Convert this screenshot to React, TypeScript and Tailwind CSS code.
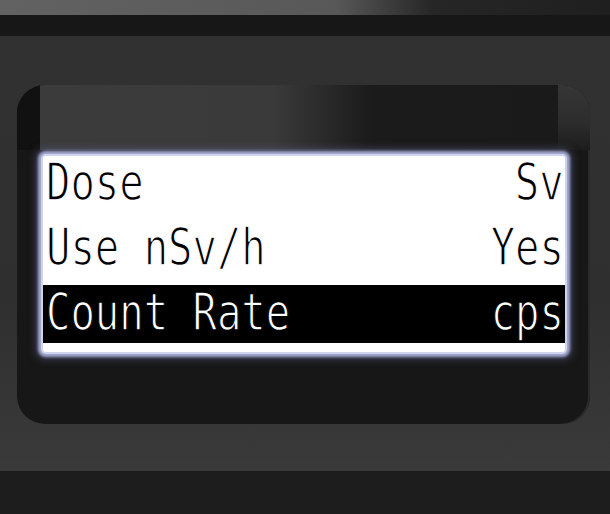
import React from "react";

const rows = [
  { label: "Dose", value: "Sv", selected: false },
  { label: "Use nSv/h", value: "Yes", selected: false },
  { label: "Count Rate", value: "cps", selected: true },
];

export default function App() {
  return (
    <div className="flex h-[514px] w-[610px] flex-col overflow-hidden bg-[#303030] font-['DejaVu_Sans_Mono',monospace]">
      {/* top edge of the case */}
      <div className="h-[15px] bg-[linear-gradient(to_right,#626262_0%,#585858_55%,#262626_71%,#1f1f1f_100%)]" />
      <div className="h-[21px] bg-[#171717]" />

      {/* case body */}
      <div className="flex-1 bg-[linear-gradient(to_bottom,#313131_0%,#2f2f2f_60%,#3a3a3a_100%)] pb-[47px] pl-[17px] pr-[20px] pt-[49px]">
        <div className="flex h-[339px] flex-col overflow-hidden rounded-[28px] bg-[#171717] shadow-[inset_-2px_0_0_#2a2a2a]">
          {/* reflection above the screen */}
          <div className="flex h-[65px]">
            <div className="w-[23px] bg-[#111111]" />
            <div className="flex-1 bg-[linear-gradient(to_right,#3b3b3b_0%,#3a3a3a_45%,#1b1b1b_64%,#1a1a1a_100%)]" />
            <div className="w-[32px] bg-[linear-gradient(to_bottom,#363636_0%,#2c2c2c_60%,#1c1c1c_100%)]" />
          </div>

          {/* LCD */}
          <div className="ml-[26px] mr-[25px] mt-[6px] rounded-[3px] bg-white pb-[9px] text-[52px] leading-[52px] shadow-[0_0_0_2px_#d0d3ee,0_0_3px_5px_#a4a9d0,0_0_9px_7px_rgba(95,100,150,0.5)]">
            {rows.map((r, i) => (
              <div
                key={r.label}
                className={`flex items-start justify-between pl-[3px] pr-[1px] ${
                  r.selected
                    ? "h-[58px] bg-black pt-[1px] text-white [-webkit-text-stroke:1.4px_#000]"
                    : "text-black [-webkit-text-stroke:1.4px_#fff]"
                } ${i === 0 ? "h-[65px]" : i === 1 ? "h-[64px]" : ""}`}
              >
                <span className="inline-block origin-left scale-x-[0.78] whitespace-pre">{r.label}</span>
                <span className="inline-block origin-right scale-x-[0.78] whitespace-pre">{r.value}</span>
              </div>
            ))}
          </div>
        </div>
      </div>

      {/* lower edge */}
      <div className="h-[43px] bg-[#1d1d1d]" />
    </div>
  );
}
